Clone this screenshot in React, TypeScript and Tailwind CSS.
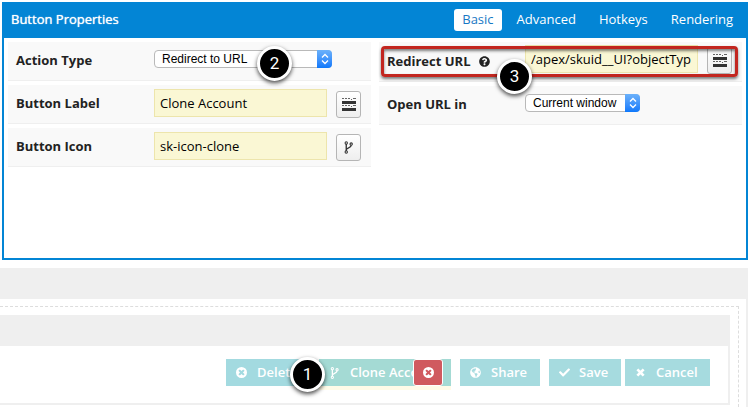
import type { ReactNode } from "react";
import { FaCheck, FaGlobeAmericas, FaQuestionCircle } from "react-icons/fa";

const tabs = ["Basic", "Advanced", "Hotkeys", "Rendering"];

function ForkIcon({ className }: { className: string }) {
  return (
    <svg viewBox="0 0 10 14" className={className} fill="none" stroke="currentColor" strokeWidth="1.2" aria-hidden="true">
      <circle cx="2.5" cy="2" r="1.3" />
      <circle cx="2.5" cy="12" r="1.3" />
      <circle cx="8" cy="3.2" r="1.3" />
      <path d="M2.5 3.2v7.600M8 4.500c0 3.400-5.500 2.300-5.500 5.300" strokeWidth="1.5" />
    </svg>
  );
}

function CircleXIcon({ className }: { className: string }) {
  return (
    <svg viewBox="0 0 12 12" className={className} aria-hidden="true">
      <path
        fill="currentColor"
        fillRule="evenodd"
        d="M6 0a6 6 0 1 1 0 12A6 6 0 0 1 6 0ZM4.200 2.600 2.600 4.200 4.400 6 2.600 7.800 4.200 9.400 6 7.600 7.800 9.400 9.400 7.800 7.600 6 9.400 4.200 7.800 2.600 6 4.400Z"
      />
    </svg>
  );
}

function CrossIcon({ className }: { className: string }) {
  return (
    <svg viewBox="0 0 10 10" className={className} stroke="currentColor" strokeWidth="3" aria-hidden="true">
      <path d="M1.500 1.500l7 7M8.500 1.500l-7 7" />
    </svg>
  );
}

function FieldsIcon() {
  return (
    <svg viewBox="0 0 14 14" className="size-[14px]" fill="currentColor" aria-hidden="true">
      <path d="M0 3h14v3H0zM0 10h14v3H0z" />
      <path d="M0 0h2v1H0zM3 0h2v1H3zM6 0h2v1H6zM9 1h1v1H9zM11 0h3v1h-3zM0 7h2v1H0zM3 7h2v1H3zM6 7h2v1H6zM9 8h1v1H9zM11 7h3v1h-3z" opacity=".75" />
    </svg>
  );
}

function Badge({ children, className }: { children: ReactNode; className: string }) {
  return (
    <span
      className={`absolute z-20 flex size-[35px] items-center justify-center rounded-full border-3 border-white bg-black text-[17px] leading-none text-white shadow-[0_2px_4px_rgba(0,0,0,0.7)] font-[Roboto,sans-serif] ${className}`}
    >
      {children}
    </span>
  );
}

function Row({ id, label, help, tall, children }: { id: string; label: string; help?: boolean; tall?: boolean; children: ReactNode }) {
  return (
    <div className={`relative flex border-b border-[#efefef] bg-[#f9f9f9] pl-2 ${tall ? "h-10" : "h-[39px]"}`}>
      <div className="flex w-[138px] shrink-0 items-center gap-2 text-[13px] font-bold text-[#222]">
        <label htmlFor={id}>{label}</label>
        {help && <FaQuestionCircle className="size-[11px]" />}
      </div>
      <div className="flex min-w-0 flex-1 pr-[10px]">{children}</div>
    </div>
  );
}

function Select({ id, value, className }: { id: string; value: string; className: string }) {
  return (
    <div className={`relative mt-2 h-[18px] ${className}`}>
      <select
        id={id}
        className="block h-full w-full appearance-none rounded-sm border border-[#b9b9b9] bg-white pl-[7px] text-xs leading-4 text-black font-['Liberation_Sans',Arial,sans-serif]"
      >
        <option>{value}</option>
      </select>
      <span className="pointer-events-none absolute inset-y-0 right-0 flex w-[15px] items-center justify-center rounded-r-sm bg-linear-to-b from-[#6bb1fa] to-[#0a78fb]">
        <svg viewBox="0 0 8 12" className="h-3 w-2" fill="none" stroke="white" strokeWidth="1.3" aria-hidden="true">
          <path d="M1 4.500 4 1.500l3 3M1 7.500l3 3 3-3" />
        </svg>
      </span>
    </div>
  );
}

function TextField({ id, value, picker, name, compact }: { id: string; value: string; picker: ReactNode; name: string; compact?: boolean }) {
  return (
    <div className={`flex w-full gap-[9px] ${compact ? "pt-[3px]" : "pt-1"}`}>
      <input
        id={id}
        defaultValue={value}
        className="h-7 min-w-0 flex-1 border border-[#ede5ac] bg-[#faf7d4] px-[5px] text-[13px] text-black"
      />
      <button
        type="button"
        aria-label={name}
        className="mt-[2px] flex h-[27px] w-[25px] shrink-0 items-center justify-center rounded-[3px] border border-[#b5b5b5] bg-linear-to-b from-white to-[#eee] text-[#333]"
      >
        {picker}
      </button>
    </div>
  );
}

function ActionButton({ icon, children, className }: { icon: ReactNode; children: ReactNode; className: string }) {
  return (
    <button type="button" className={`flex h-[27px] shrink-0 items-center text-[13px] font-semibold whitespace-nowrap text-white ${className}`}>
      {icon}
      {children}
    </button>
  );
}

export default function App() {
  return (
    <div className="flex min-h-screen flex-col bg-white pt-[2px] pr-1 font-['Open_Sans','Noto_Sans',sans-serif]">
      <section className="ml-[2px] flex h-[258px] flex-col border-2 border-t-0 border-[#0385d5]">
        <header className="flex h-9 items-center justify-between bg-[#0385d5] pr-[5px] pl-[7px] text-[13px] [text-shadow:0_0_1px_currentColor]">
          <h2 className="text-white">Button Properties</h2>
          <nav className="flex gap-[7px]">
            {tabs.map((tab, i) => (
              <button
                key={tab}
                type="button"
                className={`h-[22px] rounded-[3px] px-2 ${i === 0 ? "bg-white text-[#1878c4]" : "text-white"}`}
              >
                {tab}
              </button>
            ))}
          </nav>
        </header>
        <div className="grid grid-cols-2 gap-2 px-1 pt-1">
          <div className="flex flex-col gap-1">
            <Row id="action" label="Action Type">
              <Select id="action" value="Redirect to URL" className="w-[178px]" />
              <Badge className="top-[4px] left-[249px]">2</Badge>
            </Row>
            <Row id="label" label="Button Label">
              <TextField id="label" value="Clone Account" name="Pick field" picker={<FieldsIcon />} />
            </Row>
            <Row id="icon" label="Button Icon">
              <TextField id="icon" value="sk-icon-clone" name="Pick icon" picker={<ForkIcon className="h-[13px] w-[9px]" />} />
            </Row>
          </div>
          <div className="flex flex-col gap-1">
            <Row id="url" label="Redirect URL" help tall>
              <TextField id="url" value="/apex/skuid__UI?objectTyp" name="Pick field" picker={<FieldsIcon />} compact />
              <span className="pointer-events-none absolute top-1 right-1 bottom-1 left-[2px] z-10 rounded-[4px] border-3 border-[#c2261f] shadow-[0_2px_3px_rgba(0,0,0,0.5),inset_0_2px_3px_rgba(0,0,0,0.5)]" />
              <Badge className="top-[17px] left-[118px]">3</Badge>
            </Row>
            <Row id="target" label="Open URL in">
              <Select id="target" value="Current window" className="w-[115px]" />
            </Row>
          </div>
        </div>
      </section>

      <main className="mt-2 flex flex-1 flex-col border-t-[31px] border-r-2 border-[#efefef] pt-[7px] pr-[7px]">
        <div className="flex-1 border-t border-r border-dashed border-[#ddd] pt-2 pr-2">
          <section className="border-t-[31px] border-r-2 border-b-2 border-[#efefef]">
            <div className="flex justify-end pt-[13px] pr-[18px] pb-[17px]">
              <ActionButton icon={<CircleXIcon className="mr-[10px] size-[11px]" />} className="mr-[9px] w-[84px] bg-[#a3dae0] pl-[10px]">
                Delete
              </ActionButton>
              <div className="relative mr-[9px] -mb-1 w-[132px] shrink-0 bg-[#fffbe8] pb-1">
                <ActionButton icon={<ForkIcon className="mr-[11px] h-3 w-[9px]" />} className="w-full bg-[#a4dad4] pl-[11px]">
                  Clone Account
                </ActionButton>
                <button
                  type="button"
                  aria-label="Remove Clone Account"
                  className="absolute top-0 right-2 flex h-[27px] w-[30px] items-center justify-center rounded-[3px] border border-white bg-[#d05a5f] text-white"
                >
                  <CircleXIcon className="size-[11px]" />
                </button>
                <Badge className="top-[-2px] left-[-29px]">1</Badge>
              </div>
              <ActionButton icon={<FaGlobeAmericas className="mr-[10px] size-[11px]" />} className="mr-[9px] w-20 bg-[#a6dbdf] pl-[10px]">
                Share
              </ActionButton>
              <ActionButton icon={<FaCheck className="mr-[9px] size-[11px]" />} className="mr-1 w-[72px] bg-[#a6dbdf] pl-[10px]">
                Save
              </ActionButton>
              <ActionButton icon={<CrossIcon className="mr-[11px] size-[9px]" />} className="w-[85px] bg-[#a6dbdf] pl-[11px]">
                Cancel
              </ActionButton>
            </div>
          </section>
        </div>
      </main>
    </div>
  );
}
